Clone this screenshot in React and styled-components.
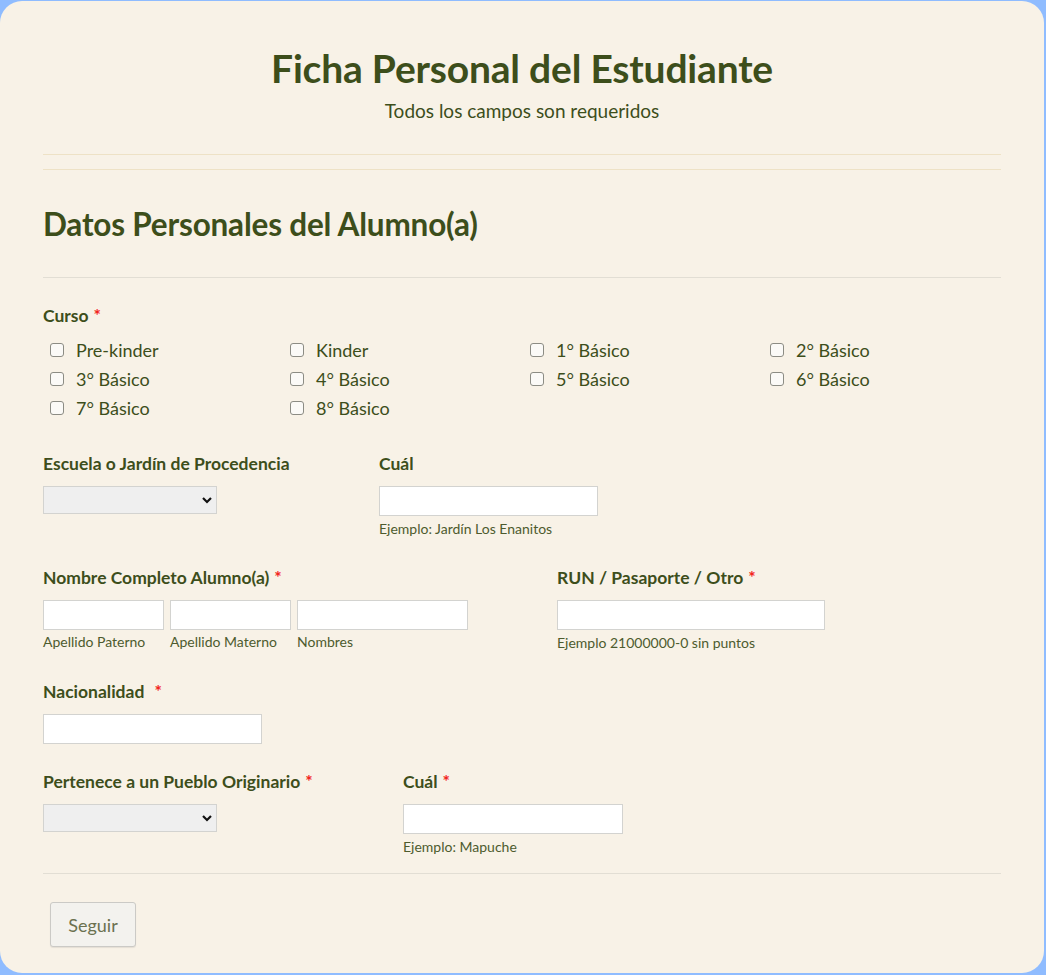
import React from "react";
import styled, { createGlobalStyle } from "styled-components";

const GlobalStyle = createGlobalStyle`
  html, body {
    margin: 0;
    padding: 0;
    background: #8fbcff;
  }
  body {
    font-family: Lato, "Open Sans", sans-serif;
  }
`;

const olive = "#3d4e1b";
const hintColor = "#4d5b2e";

const Card = styled.div`
  box-sizing: border-box;
  width: 1044px;
  height: 972px;
  margin-top: 1px;
  background: #f8f2e7;
  border-radius: 22px;
  padding: 45px 43px 0;
  color: ${olive};
`;

const Header = styled.div`
  text-align: center;
  padding-bottom: 31px;
  border-bottom: 1px solid #eee2c6;
`;

const Title = styled.h1`
  margin: 0;
  font-size: 39px;
  line-height: 44px;
  font-weight: 700;
  letter-spacing: -0.2px;
`;

const Subtitle = styled.div`
  margin-top: 9px;
  font-size: 19px;
  line-height: 24px;
`;

const SectionHead = styled.div`
  margin-top: 14px;
  border-top: 1px solid #eee2c6;
  padding: 37px 0 36px;
  border-bottom: 1px solid #e2ded4;
`;

const SectionTitle = styled.h2`
  margin: 0;
  font-size: 31.5px;
  line-height: 34px;
  font-weight: 700;
  letter-spacing: -0.2px;
`;

const Label = styled.div`
  font-size: 17.5px;
  line-height: 20px;
  font-weight: 700;
  white-space: nowrap;
`;

const Star = styled.span`
  color: #f2231b;
  margin-left: ${(p) => p.$gap || 5}px;
`;

const CursoBlock = styled.div`
  margin-top: 28px;
`;

const CheckGrid = styled.div`
  display: grid;
  grid-template-columns: repeat(4, 240px);
  grid-auto-rows: 29px;
  margin-top: 9px;
  padding-left: 7px;
`;

const CheckItem = styled.label`
  display: flex;
  align-items: center;
  font-size: 18px;
  gap: 12px;
`;

const Box = styled.span`
  box-sizing: border-box;
  width: 14px;
  height: 14px;
  border: 1.5px solid #8c8c84;
  border-radius: 3px;
  background: #fbfaf7;
  flex: none;
`;

const Row = styled.div`
  display: flex;
  margin-top: ${(p) => p.$top}px;
`;

const Field = styled.div`
  width: ${(p) => p.$w}px;
  flex: none;
`;

const Controls = styled.div`
  display: flex;
  gap: 6px;
  margin-top: 12px;
`;

const Input = styled.input`
  box-sizing: border-box;
  width: ${(p) => p.$w}px;
  height: 30px;
  border: 1px solid #d3d3d0;
  background: #fff;
  margin: 0;
  padding: 0 6px;
  outline: none;
`;

const Select = styled.div`
  box-sizing: border-box;
  width: 174px;
  height: 28px;
  border: 1px solid #d3d3d0;
  background: #efefef;
  display: flex;
  align-items: center;
  justify-content: flex-end;
  padding-right: 4px;
`;

const Sub = styled.div`
  width: ${(p) => p.$w}px;
  font-size: 14px;
  line-height: 16px;
  color: ${hintColor};
`;

const Hint = styled.div`
  margin-top: 5px;
  font-size: 14px;
  line-height: 16px;
  color: ${hintColor};
`;

const Footer = styled.div`
  margin-top: 18px;
  border-top: 1px solid #e2ded4;
  padding: 28px 0 0 7px;
`;

const Button = styled.button`
  box-sizing: border-box;
  width: 86px;
  height: 45px;
  border: 1px solid #cbcac6;
  border-radius: 3px;
  background: #f3f2ee;
  color: #6b7150;
  font-family: Lato, "Open Sans", sans-serif;
  font-size: 18px;
  box-shadow: 0 1px 1px rgba(0, 0, 0, 0.08);
`;

const Chevron = () => (
  <svg width="10" height="8" viewBox="0 0 10 8">
    <path d="M1 2 L5 6 L9 2" fill="none" stroke="#111" strokeWidth="2.2" />
  </svg>
);

const SelectBox = () => (
  <Select>
    <Chevron />
  </Select>
);

const cursos = [
  "Pre-kinder",
  "Kinder",
  "1° Básico",
  "2° Básico",
  "3° Básico",
  "4° Básico",
  "5° Básico",
  "6° Básico",
  "7° Básico",
  "8° Básico",
];

export default function App() {
  return (
    <>
      <GlobalStyle />
      <Card>
        <Header>
          <Title>Ficha Personal del Estudiante</Title>
          <Subtitle>Todos los campos son requeridos</Subtitle>
        </Header>
        <SectionHead>
          <SectionTitle>Datos Personales del Alumno(a)</SectionTitle>
        </SectionHead>

        <CursoBlock>
          <Label>
            Curso<Star>*</Star>
          </Label>
          <CheckGrid>
            {cursos.map((c) => (
              <CheckItem key={c}>
                <Box />
                {c}
              </CheckItem>
            ))}
          </CheckGrid>
        </CursoBlock>

        <Row $top={32}>
          <Field $w={336}>
            <Label>Escuela o Jardín de Procedencia</Label>
            <Controls>
              <SelectBox />
            </Controls>
          </Field>
          <Field $w={300}>
            <Label>Cuál</Label>
            <Controls>
              <Input $w={219} />
            </Controls>
            <Hint>Ejemplo: Jardín Los Enanitos</Hint>
          </Field>
        </Row>

        <Row $top={31}>
          <Field $w={514}>
            <Label>
              Nombre Completo Alumno(a)<Star>*</Star>
            </Label>
            <Controls>
              <Input $w={121} />
              <Input $w={121} />
              <Input $w={171} />
            </Controls>
            <Controls style={{ marginTop: 4 }}>
              <Sub $w={121}>Apellido Paterno</Sub>
              <Sub $w={121}>Apellido Materno</Sub>
              <Sub $w={171}>Nombres</Sub>
            </Controls>
          </Field>
          <Field $w={300}>
            <Label>
              RUN / Pasaporte / Otro<Star>*</Star>
            </Label>
            <Controls>
              <Input $w={268} />
            </Controls>
            <Hint>Ejemplo 21000000-0 sin puntos</Hint>
          </Field>
        </Row>

        <Row $top={31}>
          <Field $w={300}>
            <Label>
              Nacionalidad<Star $gap={10}>*</Star>
            </Label>
            <Controls>
              <Input $w={219} />
            </Controls>
          </Field>
        </Row>

        <Row $top={28}>
          <Field $w={360}>
            <Label>
              Pertenece a un Pueblo Originario<Star>*</Star>
            </Label>
            <Controls>
              <SelectBox />
            </Controls>
          </Field>
          <Field $w={300}>
            <Label>
              Cuál<Star>*</Star>
            </Label>
            <Controls>
              <Input $w={220} />
            </Controls>
            <Hint>Ejemplo: Mapuche</Hint>
          </Field>
        </Row>

        <Footer>
          <Button>Seguir</Button>
        </Footer>
      </Card>
    </>
  );
}
